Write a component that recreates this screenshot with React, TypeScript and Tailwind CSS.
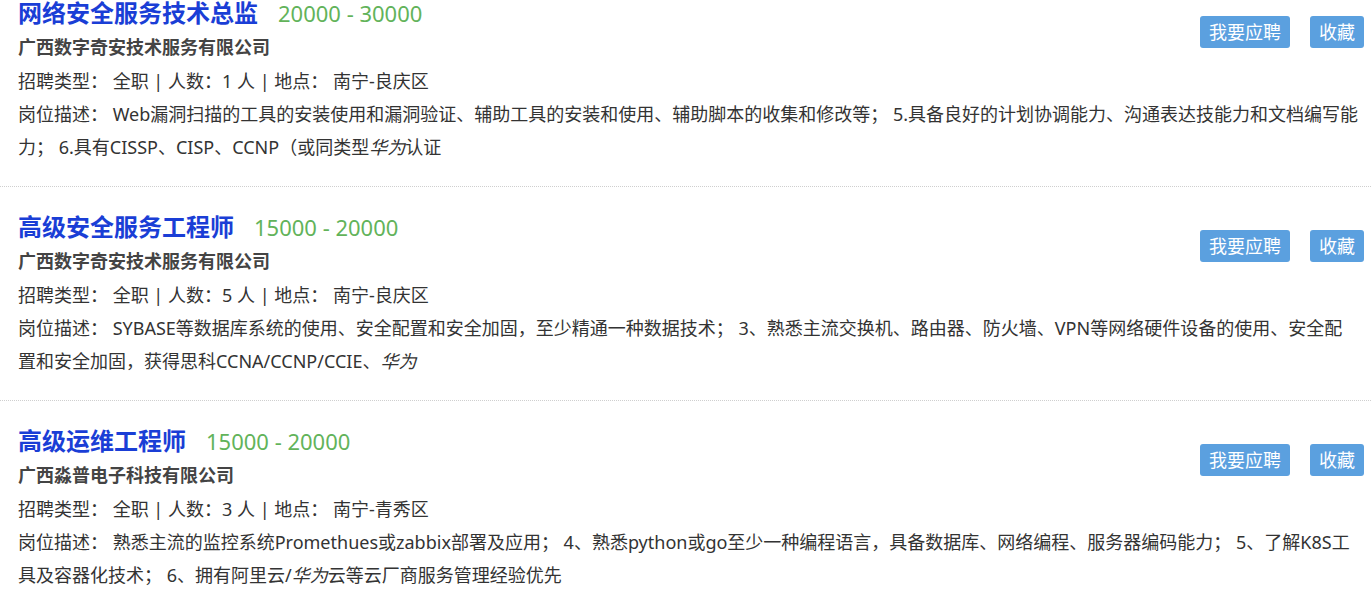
import React from "react";

interface Job {
  title: string;
  salary: string;
  company: string;
  count: number;
  place: string;
  desc: React.ReactNode;
}

const HW = () => <i>华为</i>;

const jobs: Job[] = [
  {
    title: "网络安全服务技术总监",
    salary: "20000 - 30000",
    company: "广西数字奇安技术服务有限公司",
    count: 1,
    place: "南宁-良庆区",
    desc: (
      <>
        Web漏洞扫描的工具的安装使用和漏洞验证、辅助工具的安装和使用、辅助脚本的收集和修改等； 5.具备良好的计划协调能力、沟通表达技能力和文档编写能力； 6.具有CISSP、CISP、CCNP（或同类型<HW />认证
      </>
    ),
  },
  {
    title: "高级安全服务工程师",
    salary: "15000 - 20000",
    company: "广西数字奇安技术服务有限公司",
    count: 5,
    place: "南宁-良庆区",
    desc: (
      <>
        SYBASE等数据库系统的使用、安全配置和安全加固，至少精通一种数据技术； 3、熟悉主流交换机、路由器、防火墙、VPN等网络硬件设备的使用、安全配置和安全加固，获得思科CCNA/CCNP/CCIE、<HW />
      </>
    ),
  },
  {
    title: "高级运维工程师",
    salary: "15000 - 20000",
    company: "广西淼普电子科技有限公司",
    count: 3,
    place: "南宁-青秀区",
    desc: (
      <>
        熟悉主流的监控系统Promethues或zabbix部署及应用； 4、熟悉python或go至少一种编程语言，具备数据库、网络编程、服务器编码能力； 5、了解K8S工具及容器化技术； 6、拥有阿里云/<HW />云等云厂商服务管理经验优先
      </>
    ),
  },
];

const JobItem: React.FC<{ job: Job; last: boolean }> = ({ job, last }) => (
  <div
    className={`pl-[18px] pr-[12px] pt-[23px] pb-[22px] ${
      last ? "" : "border-b border-dotted border-[#cfcfcf]"
    }`}
  >
    <div className="float-right -mr-[5px] mt-[20px] flex gap-[20px]">
      <button className="h-[32px] px-[9px] rounded-[3px] bg-[#5ba0df] text-white text-[18px] leading-[32px]">
        我要应聘
      </button>
      <button className="h-[32px] px-[9px] rounded-[3px] bg-[#5ba0df] text-white text-[18px] leading-[32px]">
        收藏
      </button>
    </div>
    <div className="flex items-center h-[34px]">
      <span className="text-[24px] font-bold text-[#1a3ed6]">{job.title}</span>
      <span className="ml-[20px] text-[22px] text-[#62b35a]">{job.salary}</span>
    </div>
    <div className="h-[34px] leading-[34px] text-[18px] font-bold text-[#444]">
      {job.company}
    </div>
    <div className="h-[34px] leading-[34px] text-[18px] text-[#333]">
      招聘类型： 全职 | 人数：{job.count} 人 | 地点： {job.place}
    </div>
    <p className="leading-[33px] text-[18px] text-[#333]">
      岗位描述： {job.desc}
    </p>
  </div>
);

export default function App() {
  return (
    <div
      className="bg-white h-[590px] overflow-hidden"
      style={{ fontFamily: '"Noto Sans", "Noto Sans CJK SC", sans-serif' }}
    >
      <div className="-mt-[27px]">
        {jobs.map((job, i) => (
          <JobItem key={i} job={job} last={i === jobs.length - 1} />
        ))}
      </div>
    </div>
  );
}
